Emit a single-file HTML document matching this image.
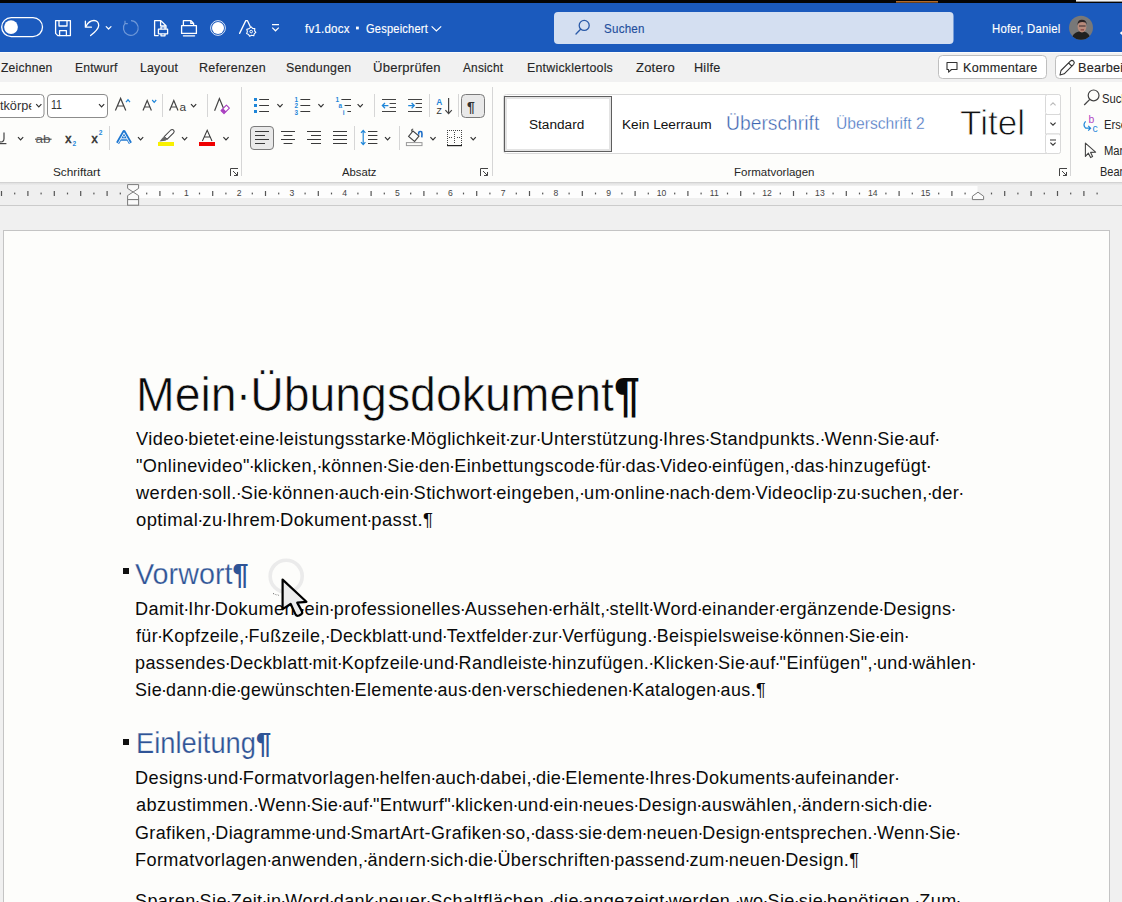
<!DOCTYPE html>
<html><head><meta charset="utf-8">
<style>
*{margin:0;padding:0;box-sizing:border-box}
html,body{width:1122px;height:902px;overflow:hidden;background:#ededed;font-family:'Liberation Sans',sans-serif}
.a{position:absolute}
.tx{position:absolute;white-space:nowrap;line-height:1;transform-origin:0 0}
.d{margin-left:-1px;letter-spacing:-1px}
.pb{-webkit-text-stroke:0;font-weight:bold}
#top{left:0;top:0;width:1122px;height:3px;background:#050505}
#title{left:0;top:3px;width:1122px;height:49px;background:#1b5abd}
#tabs{left:0;top:52px;width:1122px;height:30px;background:#f1f1f1;border-top:1px solid #fbfbfb}
#ribbon{left:0;top:82px;width:1122px;height:100px;background:#fdfdfb}
#ruler{left:0;top:182px;width:1122px;height:24px;background:#eeeeee;border-top:1px solid #d9d9d9;border-bottom:1px solid #cfcfcf}
#rulerw{left:133px;top:185px;width:845px;height:14px;background:#fdfdfd}
#docbg{left:0;top:206px;width:1122px;height:696px;background:#f0f0f0}
#page{left:3px;top:230px;width:1107px;height:700px;background:#fdfdfb;border:1px solid #c4c4c4}
</style></head><body>
<div class="a" id="top"></div>
<div class="a" id="title"></div>
<div class="a" id="tabs"></div>
<div class="a" id="ribbon"></div>
<div class="a" id="docbg"></div>
<div class="a" id="page"></div>
<svg class="a" style="left:0;top:0" width="1122" height="52" viewBox="0 0 1122 52">
<rect x="896" y="1" width="42" height="1.6" fill="#b06a2a"/>
<rect x="1076" y="0" width="46" height="1.6" fill="#f4f4f4"/>
<g fill="none" stroke="#fff" stroke-width="1.3" stroke-linejoin="round" stroke-linecap="round">
<rect x="1.7" y="17.6" width="40.8" height="19" rx="9.5"/>
<path d="M55.6,20.6 H70.4 V35.6 H57.8 L55.6,33.4 Z"/>
<path d="M59,20.6 V26 H67 V20.6"/>
<path d="M59.6,35.6 V30.6 H66.4 V35.6"/>
<path d="M85.4,21.2 V27.2 H91.4"/>
<path d="M86,26.4 C88,22.2 91,20.5 94,20.5 C97,20.5 98.7,23 98.7,25.4 C98.7,28.2 96,31.2 90.6,35.6"/>
<path d="M106.2,26.6 L108.6,29 L111,26.6" stroke-width="1.2"/>
<path d="M154.6,35.6 V20.6 H160.8 L166,25.8 V28.2 M160.6,20.6 V25.8 H166 M154.6,35.6 H158.2"/>
<path d="M161,29.2 V26.8 H165 V29.2 M161,33.8 V35.8 H165 V33.8" fill="#1b5abd"/><path d="M158.4,29.2 H167.6 V33.8 H158.4 Z" fill="#1b5abd"/>
<path d="M183.4,25.2 V20.6 H191 L193.6,23.4 V25.2 M190.8,20.6 V23.4 H193.6"/>
<rect x="181.6" y="25.6" width="14.8" height="7.8"/>
<path d="M183.4,35.8 H194.6"/>
<path d="M239.6,33.4 L245.8,20.6 H247.4 L250.2,26.6"/>
</g>
<circle cx="11" cy="27.1" r="6.9" fill="#fff"/>
<path d="M131,20.6 A7.4,7.4 0 1 1 125.2,23.2 M125,20.8 V23.6 H127.8" fill="none" stroke="#6f98d8" stroke-width="1.2"/>
<circle cx="218" cy="28" r="7.4" fill="none" stroke="#d8e4f7" stroke-width="1"/>
<circle cx="218" cy="28" r="6" fill="#fff"/>
<g fill="none" stroke="#fff" stroke-width="1.2">
<path d="M251.2,26.8 L252.6,28.4 L254.8,28.6 L254.6,30.8 L255.8,32.4 L254.2,33.8 L253.8,35.8 L251.6,35.2 L249.6,36.2 L248.6,34.4 L246.6,33.6 L247.4,31.6 L246.8,29.4 L248.8,28.8 Z" stroke-width="1.1" stroke-linejoin="round"/>
<circle cx="251.2" cy="31.6" r="1.3" stroke-width="1"/>
<path d="M272,24.6 H279 M272.2,27.6 L275.5,30.8 L278.8,27.6"/>
</g>
<g fill="none" stroke="#1f4fa0" stroke-width="1.3" stroke-linecap="round">
</g>
<rect x="554" y="12" width="399.5" height="32" rx="4" fill="#d4dff1"/>
<circle cx="584.2" cy="25.4" r="5" fill="none" stroke="#2a5aa8" stroke-width="1.3"/>
<path d="M580.6,29.2 L576,34" stroke="#2a5aa8" stroke-width="1.3" stroke-linecap="round"/>
<rect x="356" y="26.6" width="2.8" height="2.8" fill="#fff"/>
<path d="M431.6,26.4 L436.4,31 L441.2,26.4" fill="none" stroke="#fff" stroke-width="1.2"/>
<defs><clipPath id="av"><circle cx="1081" cy="27.8" r="12"/></clipPath></defs>
<g clip-path="url(#av)">
<rect x="1068" y="15" width="26" height="26" fill="#787878"/>
<path d="M1071,41 Q1072,33 1079,31.6 H1084 Q1090,33 1091,41 Z" fill="#202020"/>
<ellipse cx="1082" cy="26.6" rx="4.4" ry="5.8" fill="#b88a7a"/>
<path d="M1077.4,25 Q1077.6,19.6 1082,19.8 Q1086.6,19.8 1086.8,24.6 L1085.6,22.6 Q1082,21 1078.6,23 Z" fill="#2a2222"/>
<rect x="1079" y="25.4" width="6.6" height="1.2" fill="#4a3a3a"/>
<rect x="1080.6" y="29.4" width="3.4" height="1" fill="#7a3030"/>
</g>
<path d="M1122,31.2 L1119.8,33.1 L1122,35 Z" fill="#fff"/>
</svg>

<svg class="a" style="left:0;top:52px" width="1122" height="160" viewBox="0 52 1122 160">
<defs><clipPath id="fnc"><rect x="0" y="90" width="32" height="30"/></clipPath></defs>
<!-- tab buttons -->
<rect x="938.5" y="55.5" width="108" height="23" rx="4" fill="#fff" stroke="#bfbfbf"/>
<path d="M947,62.5 H957 V69.5 H951.5 L948.6,72.2 V69.5 H947 Z" fill="none" stroke="#333" stroke-width="1.1" stroke-linejoin="round"/>
<rect x="1055.5" y="55.5" width="80" height="23" rx="4" fill="#fff" stroke="#bfbfbf"/>
<path d="M1060,75 L1061,70.5 L1070.4,61.1 Q1072,59.6 1073.6,61.2 Q1075,62.8 1073.6,64.3 L1064.2,73.8 Z M1068.6,63 L1071.8,66.2" fill="none" stroke="#333" stroke-width="1.1" stroke-linejoin="round"/>
<!-- ribbon separators -->
<g stroke="#d6d6d6" stroke-width="1">
<path d="M241.5,87 V176 M492.5,87 V176 M1070.5,87 V176"/>
<path d="M162.5,94 V117 M207.5,94 V117 M109.5,126 V150 M374.5,94 V117 M429.5,94 V117 M458.5,94 V117 M354.5,126 V150 M399.5,126 V150"/>
</g>
<!-- font boxes -->
<rect x="-6" y="94.5" width="50" height="23" rx="3.5" fill="#fff" stroke="#8c8c8c"/>
<rect x="47.5" y="94.5" width="60" height="23" rx="3.5" fill="#fff" stroke="#8c8c8c"/>
<g fill="none" stroke="#333" stroke-width="1.2">
<path d="M36.2,104.2 L38.8,106.8 L41.4,104.2 M99,104.2 L101.6,106.8 L104.2,104.2"/>
<path d="M191,104.2 L193.6,106.8 L196.2,104.2"/>
<path d="M18,137.2 L20.6,139.8 L23.2,137.2 M138,137.2 L140.6,139.8 L143.2,137.2 M182,137.2 L184.6,139.8 L187.2,137.2 M223.4,137.2 L226,139.8 L228.6,137.2"/>
<path d="M277.4,104.2 L280,106.8 L282.6,104.2 M318.4,104.2 L321,106.8 L323.6,104.2 M357.6,104.2 L360.2,106.8 L362.8,104.2"/>
<path d="M385,137.2 L387.6,139.8 L390.2,137.2 M430.4,137.2 L433,139.8 L435.6,137.2 M470.6,137.2 L473.2,139.8 L475.8,137.2"/>
</g>
<!-- grow / shrink / Aa / clear -->
<g fill="none" stroke="#444" stroke-width="1.2" stroke-linejoin="miter">
<path d="M115.4,110.6 L120.6,98.4 L125.8,110.6 M117.4,106 H123.8"/>
<path d="M143,110.6 L147.2,100.6 L151.4,110.6 M144.6,107 H149.8"/>
<path d="M169.6,110.6 L173.8,100.6 L178,110.6 M171.2,107 H176.4"/>
<path d="M214.6,110.8 L219.4,98.6 L223.6,108.4"/>
</g>
<text x="179.4" y="110.8" font-family="Liberation Sans" font-size="11.8" fill="#3a3a3a">a</text>
<path d="M126,102.2 L128,99.8 L130,102.2" fill="none" stroke="#1f86d9" stroke-width="1.2"/>
<path d="M152.2,100 L154.2,102.4 L156.2,100" fill="none" stroke="#1f86d9" stroke-width="1.2"/>
<path d="M221,110.6 L226.4,105.2 L229.4,108.2 L224,113.6 Z" fill="#fff" stroke="#a93fc0" stroke-width="1.1" stroke-linejoin="round"/><path d="M221,110.6 L223.2,108.4 L226.2,111.4 L224,113.6 Z" fill="#a93fc0"/>
<!-- row 2 font -->
<clipPath id="uc"><rect x="0" y="125" width="8" height="25"/></clipPath>
<g clip-path="url(#uc)" fill="none" stroke="#444" stroke-width="1.2"><path d="M-2,132.4 V138.6 Q-2,142 1,142 Q4,142 4,138.6 V132.4"/><path d="M-4,143.6 H6.4"/></g>
<text x="35.6" y="142.6" font-family="Liberation Sans" font-size="11.4" fill="#555" textLength="15" lengthAdjust="spacingAndGlyphs">ab</text>
<path d="M35,139.2 H51.6" stroke="#444" stroke-width="1.1"/>
<text x="65.2" y="142.6" font-family="Liberation Sans" font-size="12.4" fill="#333" stroke="#333" stroke-width="0.5">x</text>
<text x="72.6" y="146.2" font-family="Liberation Sans" font-weight="bold" font-size="6.6" fill="#1f86d9">2</text>
<text x="91.4" y="142.6" font-family="Liberation Sans" font-size="12.4" fill="#333" stroke="#333" stroke-width="0.5">x</text>
<text x="98.8" y="134.6" font-family="Liberation Sans" font-weight="bold" font-size="6.6" fill="#1f86d9">2</text>
<path d="M117.6,143.2 L124,131.8 L130.4,143.2 M120.2,139 H127.8" fill="none" stroke="#1f78d1" stroke-width="3.4" stroke-linejoin="round"/>
<path d="M118.4,142.8 L124,132.8 L129.6,142.8 M120.8,138.8 H127.2" fill="none" stroke="#fff" stroke-width="0.9"/>
<path d="M164.2,136.6 L170.8,130 Q172.2,128.8 173.6,130.2 Q174.8,131.6 173.6,132.8 L167,139.4 Z" fill="#fff" stroke="#444" stroke-width="1.05" stroke-linejoin="round"/>
<path d="M164.2,136.6 L167,139.4 L165.4,140.8 L159.4,141.6 L162.6,137.8 Z" fill="#666"/>
<rect x="158" y="142" width="16" height="4" fill="#f8f000"/>
<path d="M202.4,141 L207.2,130.2 L212,141 M204.2,137 H210.2" fill="none" stroke="#3a3a3a" stroke-width="1.05"/>
<rect x="199" y="142" width="16" height="4" fill="#f00000"/>
<!-- dialog launchers -->
<g fill="none" stroke="#444" stroke-width="1">
<path d="M230.5,176 V168.5 H238 M233,171 L237.5,175.5 M234,175.5 H237.5 V172"/>
<path d="M480.5,176 V168.5 H488 M483,171 L487.5,175.5 M484,175.5 H487.5 V172"/>
<path d="M1059.5,176 V168.5 H1067 M1062,171 L1066.5,175.5 M1063,175.5 H1066.5 V172"/>
</g>
<!-- paragraph row 1 -->
<g fill="#1f86d9">
<rect x="254" y="98" width="3" height="3"/><rect x="254" y="104" width="3" height="3"/><rect x="254" y="110" width="3" height="3"/>
</g>
<g stroke="#3a3a3a" stroke-width="1.05">
<path d="M259.2,99.5 H269 M259.2,105.5 H269 M259.2,111.5 H269"/>
<path d="M300.4,99.5 H310.2 M300.4,105.5 H310.2 M300.4,111.5 H310.2"/>
<path d="M341.4,99.5 H351 M344.6,105.5 H351 M347.4,111.5 H351"/>
</g>
<g font-family="Liberation Sans" font-weight="bold" fill="#1f86d9">
<text x="294.6" y="102.2" font-size="6.4">1</text><text x="294.6" y="108.4" font-size="6.4">2</text><text x="294.6" y="114.6" font-size="6.4">3</text>
<text x="335.4" y="102.2" font-size="6.4">1</text><text x="338.6" y="108.4" font-size="6.4">a</text><text x="342.8" y="114.6" font-size="6.4">i</text>
</g>
<g stroke="#444" stroke-width="1.2" fill="none">
<path d="M382,99.5 H396 M389.6,103.5 H396 M389.6,107.5 H396 M382,111.5 H396"/>
<path d="M408,99.5 H422 M415.6,103.5 H422 M415.6,107.5 H422 M408,111.5 H422"/>
<path d="M448.6,98 V113.4 M445.4,110.2 L448.6,113.6 L451.8,110.2"/>
</g>
<path d="M388.4,105.6 H382.4 M385,103 L382.4,105.6 L385,108.2" fill="none" stroke="#1f86d9" stroke-width="1.3"/>
<path d="M408.2,105.6 H414 M411.6,103 L414.2,105.6 L411.6,108.2" fill="none" stroke="#1f86d9" stroke-width="1.3"/>
<text x="436.2" y="105" font-family="Liberation Sans" font-weight="bold" font-size="8.4" fill="#1f86d9">A</text>
<text x="436.4" y="114" font-family="Liberation Sans" font-size="8.6" fill="#333">Z</text>
<rect x="461.5" y="94.5" width="23" height="23" rx="4" fill="#e9e9e9" stroke="#7a7a7a"/>
<text x="467" y="111.6" font-family="Liberation Sans" font-weight="bold" font-size="14" fill="#333">¶</text>
<!-- paragraph row 2 -->
<rect x="250.5" y="126.5" width="23" height="23" rx="3.5" fill="#e9e9e9" stroke="#7a7a7a"/>
<g stroke="#3a3a3a" stroke-width="1.05">
<path d="M255,131.5 H269 M255,135.5 H265 M255,139.5 H269 M255,143.5 H265"/>
<path d="M281,131.5 H295 M283.6,135.5 H292.4 M281,139.5 H295 M283.6,143.5 H292.4"/>
<path d="M307,131.5 H321 M311,135.5 H321 M307,139.5 H321 M311,143.5 H321"/>
<path d="M333,131.5 H347 M333,135.5 H347 M333,139.5 H347 M333,143.5 H347"/>
<path d="M368,131.5 H377.4 M368,135.5 H377.4 M368,139.5 H377.4 M368,143.5 H377.4"/>
</g>
<path d="M363.2,130.6 V144.4 M361,132.8 L363.2,130.4 L365.4,132.8 M361,142.2 L363.2,144.6 L365.4,142.2" fill="none" stroke="#1f86d9" stroke-width="1.2"/>
<path d="M408.6,136.4 L413,131 L419,136 L414.6,141.4 Z M412,131.6 Q411,129.4 413.2,129" fill="none" stroke="#444" stroke-width="1.1"/>
<path d="M418.8,134.6 Q418,130.6 421.6,131.8 Q422.4,134 421.8,137.4" fill="none" stroke="#1f6fc8" stroke-width="1.6"/>
<rect x="406.4" y="142.6" width="15.6" height="3" fill="none" stroke="#999" stroke-width="1"/>
<g fill="#444"><path d="M447,130 h1 v1 h-1z M449,130 h1 v1 h-1z M451,130 h1 v1 h-1z M453,130 h1 v1 h-1z M455,130 h1 v1 h-1z M457,130 h1 v1 h-1z M459,130 h1 v1 h-1z M461,130 h1 v1 h-1z M447,132 h1 v1 h-1z M461,132 h1 v1 h-1z M447,134 h1 v1 h-1z M461,134 h1 v1 h-1z M447,136 h1 v1 h-1z M461,136 h1 v1 h-1z M447,138 h1 v1 h-1z M461,138 h1 v1 h-1z M447,140 h1 v1 h-1z M461,140 h1 v1 h-1z M447,142 h1 v1 h-1z M461,142 h1 v1 h-1z M447,144 h1 v1 h-1z M461,144 h1 v1 h-1z M454,132 h1 v1 h-1z M454,134 h1 v1 h-1z M454,136 h1 v1 h-1z M454,138 h1 v1 h-1z M454,140 h1 v1 h-1z M454,142 h1 v1 h-1z M449,137 h1 v1 h-1z M451,137 h1 v1 h-1z M457,137 h1 v1 h-1z M459,137 h1 v1 h-1z"/><rect x="447" y="145" width="15" height="1.2" fill="#222"/></g>
<!-- styles gallery -->
<rect x="503.5" y="94.5" width="557" height="59" rx="3" fill="#fff" stroke="#d9d9d9"/>
<rect x="504.5" y="96.5" width="107" height="55" fill="#fff" stroke="#5e5e5e"/>
<rect x="506" y="98" width="104" height="52" fill="none" stroke="#e3e3e3" stroke-width="2"/>
<g fill="#fff" stroke="#d9d9d9">
<rect x="1045.5" y="94.5" width="15" height="20" rx="2"/>
<rect x="1045.5" y="114.5" width="15" height="19.5"/>
<rect x="1045.5" y="134" width="15" height="19.5" rx="2"/>
</g>
<g fill="none" stroke="#bbb" stroke-width="1.1"><path d="M1050.4,105.4 L1053,102.8 L1055.6,105.4"/></g>
<g fill="none" stroke="#333" stroke-width="1.1"><path d="M1050.4,122.6 L1053,125.2 L1055.6,122.6 M1050,140 H1056 M1050.4,142.6 L1053,145.2 L1055.6,142.6"/></g>
<!-- editing -->
<circle cx="1093.6" cy="95.4" r="5.4" fill="none" stroke="#444" stroke-width="1.2"/>
<path d="M1089.8,99.4 L1084.2,105" stroke="#444" stroke-width="1.3"/>
<text x="1088.4" y="123.4" font-family="Liberation Sans" font-size="10.4" fill="#b146c2">b</text>
<text x="1092.6" y="131.6" font-family="Liberation Sans" font-size="10.4" fill="#1f86d9">c</text>
<path d="M1085.6,121.4 Q1082.4,125 1085.6,128.2 H1090.4 M1088.2,125.8 L1090.6,128.2 L1088.2,130.6" fill="none" stroke="#1f86d9" stroke-width="1.2"/>
<path d="M1085.4,143.2 V156.4 L1088.4,153.2 L1090.6,157.6 L1092.6,156.6 L1090.6,152.4 L1095.6,152.2 Z" fill="none" stroke="#444" stroke-width="1.1" stroke-linejoin="round"/>
<!-- ruler -->
</svg>

<svg class="a" style="left:0;top:180px" width="1122" height="30" viewBox="0 180 1122 30">
<defs><linearGradient id="rg" x1="0" y1="0" x2="0" y2="1"><stop offset="0" stop-color="#d9d9d9"/><stop offset="1" stop-color="#efefef"/></linearGradient></defs>
<rect x="0" y="182" width="1122" height="23.5" fill="#efefef"/>
<rect x="0" y="182" width="1122" height="3.5" fill="url(#rg)"/>
<path d="M0,182.5 H1122" stroke="#d2d2d2"/><path d="M0,205.5 H1122" stroke="#cbcbcb"/>
<rect x="133.5" y="186" width="844" height="12" fill="#fdfdfd"/>
<rect x="0.9" y="191" width="1.2" height="5" fill="#555"/>
<rect x="14.1" y="192.6" width="1.2" height="1.8" fill="#555"/>
<rect x="27.3" y="191" width="1.2" height="5" fill="#555"/>
<rect x="40.5" y="192.6" width="1.2" height="1.8" fill="#555"/>
<rect x="53.7" y="191" width="1.2" height="5" fill="#555"/>
<rect x="66.9" y="192.6" width="1.2" height="1.8" fill="#555"/>
<rect x="80.1" y="191" width="1.2" height="5" fill="#555"/>
<rect x="93.3" y="192.6" width="1.2" height="1.8" fill="#555"/>
<rect x="106.5" y="191" width="1.2" height="5" fill="#555"/>
<rect x="119.7" y="192.6" width="1.2" height="1.8" fill="#555"/>
<rect x="146.1" y="192.6" width="1.2" height="1.8" fill="#555"/>
<rect x="159.3" y="191" width="1.2" height="5" fill="#555"/>
<rect x="172.5" y="192.6" width="1.2" height="1.8" fill="#555"/>
<text x="186.3" y="196" font-family="Liberation Sans" font-size="8.6" fill="#444" text-anchor="middle">1</text>
<rect x="198.9" y="192.6" width="1.2" height="1.8" fill="#555"/>
<rect x="212.1" y="191" width="1.2" height="5" fill="#555"/>
<rect x="225.3" y="192.6" width="1.2" height="1.8" fill="#555"/>
<text x="239.1" y="196" font-family="Liberation Sans" font-size="8.6" fill="#444" text-anchor="middle">2</text>
<rect x="251.7" y="192.6" width="1.2" height="1.8" fill="#555"/>
<rect x="264.9" y="191" width="1.2" height="5" fill="#555"/>
<rect x="278.1" y="192.6" width="1.2" height="1.8" fill="#555"/>
<text x="291.9" y="196" font-family="Liberation Sans" font-size="8.6" fill="#444" text-anchor="middle">3</text>
<rect x="304.5" y="192.6" width="1.2" height="1.8" fill="#555"/>
<rect x="317.7" y="191" width="1.2" height="5" fill="#555"/>
<rect x="330.9" y="192.6" width="1.2" height="1.8" fill="#555"/>
<text x="344.7" y="196" font-family="Liberation Sans" font-size="8.6" fill="#444" text-anchor="middle">4</text>
<rect x="357.3" y="192.6" width="1.2" height="1.8" fill="#555"/>
<rect x="370.5" y="191" width="1.2" height="5" fill="#555"/>
<rect x="383.7" y="192.6" width="1.2" height="1.8" fill="#555"/>
<text x="397.5" y="196" font-family="Liberation Sans" font-size="8.6" fill="#444" text-anchor="middle">5</text>
<rect x="410.1" y="192.6" width="1.2" height="1.8" fill="#555"/>
<rect x="423.3" y="191" width="1.2" height="5" fill="#555"/>
<rect x="436.5" y="192.6" width="1.2" height="1.8" fill="#555"/>
<text x="450.3" y="196" font-family="Liberation Sans" font-size="8.6" fill="#444" text-anchor="middle">6</text>
<rect x="462.9" y="192.6" width="1.2" height="1.8" fill="#555"/>
<rect x="476.1" y="191" width="1.2" height="5" fill="#555"/>
<rect x="489.3" y="192.6" width="1.2" height="1.8" fill="#555"/>
<text x="503.1" y="196" font-family="Liberation Sans" font-size="8.6" fill="#444" text-anchor="middle">7</text>
<rect x="515.7" y="192.6" width="1.2" height="1.8" fill="#555"/>
<rect x="528.9" y="191" width="1.2" height="5" fill="#555"/>
<rect x="542.1" y="192.6" width="1.2" height="1.8" fill="#555"/>
<text x="555.9" y="196" font-family="Liberation Sans" font-size="8.6" fill="#444" text-anchor="middle">8</text>
<rect x="568.5" y="192.6" width="1.2" height="1.8" fill="#555"/>
<rect x="581.7" y="191" width="1.2" height="5" fill="#555"/>
<rect x="594.9" y="192.6" width="1.2" height="1.8" fill="#555"/>
<text x="608.7" y="196" font-family="Liberation Sans" font-size="8.6" fill="#444" text-anchor="middle">9</text>
<rect x="621.3" y="192.6" width="1.2" height="1.8" fill="#555"/>
<rect x="634.5" y="191" width="1.2" height="5" fill="#555"/>
<rect x="647.7" y="192.6" width="1.2" height="1.8" fill="#555"/>
<text x="661.5" y="196" font-family="Liberation Sans" font-size="8.6" fill="#444" text-anchor="middle">10</text>
<rect x="674.1" y="192.6" width="1.2" height="1.8" fill="#555"/>
<rect x="687.3" y="191" width="1.2" height="5" fill="#555"/>
<rect x="700.5" y="192.6" width="1.2" height="1.8" fill="#555"/>
<text x="714.3" y="196" font-family="Liberation Sans" font-size="8.6" fill="#444" text-anchor="middle">11</text>
<rect x="726.9" y="192.6" width="1.2" height="1.8" fill="#555"/>
<rect x="740.1" y="191" width="1.2" height="5" fill="#555"/>
<rect x="753.3" y="192.6" width="1.2" height="1.8" fill="#555"/>
<text x="767.1" y="196" font-family="Liberation Sans" font-size="8.6" fill="#444" text-anchor="middle">12</text>
<rect x="779.7" y="192.6" width="1.2" height="1.8" fill="#555"/>
<rect x="792.9" y="191" width="1.2" height="5" fill="#555"/>
<rect x="806.1" y="192.6" width="1.2" height="1.8" fill="#555"/>
<text x="819.9" y="196" font-family="Liberation Sans" font-size="8.6" fill="#444" text-anchor="middle">13</text>
<rect x="832.5" y="192.6" width="1.2" height="1.8" fill="#555"/>
<rect x="845.7" y="191" width="1.2" height="5" fill="#555"/>
<rect x="858.9" y="192.6" width="1.2" height="1.8" fill="#555"/>
<text x="872.7" y="196" font-family="Liberation Sans" font-size="8.6" fill="#444" text-anchor="middle">14</text>
<rect x="885.3" y="192.6" width="1.2" height="1.8" fill="#555"/>
<rect x="898.5" y="191" width="1.2" height="5" fill="#555"/>
<rect x="911.7" y="192.6" width="1.2" height="1.8" fill="#555"/>
<text x="925.5" y="196" font-family="Liberation Sans" font-size="8.6" fill="#444" text-anchor="middle">15</text>
<rect x="938.1" y="192.6" width="1.2" height="1.8" fill="#555"/>
<rect x="951.3" y="191" width="1.2" height="5" fill="#555"/>
<rect x="964.5" y="192.6" width="1.2" height="1.8" fill="#555"/>
<rect x="990.9" y="192.6" width="1.2" height="1.8" fill="#555"/>
<rect x="1004.1" y="191" width="1.2" height="5" fill="#555"/>
<rect x="1017.3" y="192.6" width="1.2" height="1.8" fill="#555"/>
<rect x="1030.5" y="191" width="1.2" height="5" fill="#555"/>
<rect x="1043.7" y="192.6" width="1.2" height="1.8" fill="#555"/>
<rect x="1056.9" y="191" width="1.2" height="5" fill="#555"/>
<rect x="1070.1" y="192.6" width="1.2" height="1.8" fill="#555"/>
<rect x="1083.3" y="191" width="1.2" height="5" fill="#555"/>
<rect x="1096.5" y="192.6" width="1.2" height="1.8" fill="#555"/>
<path d="M127.6,184.6 H138.6 V188.4 L133.1,192 L127.6,188.4 Z" fill="#fbfbfb" stroke="#7a7a7a" stroke-width="1"/>
<path d="M133.1,192 L138.6,195.6 V199.6 H127.6 V195.6 Z" fill="#fbfbfb" stroke="#7a7a7a" stroke-width="1"/>
<rect x="127.6" y="199.6" width="11" height="5.6" fill="#fbfbfb" stroke="#7a7a7a" stroke-width="1"/>
<path d="M978,192.2 L983.6,196.2 V199.6 H972.4 V196.2 Z" fill="#fbfbfb" stroke="#7a7a7a" stroke-width="1"/>
</svg>
<div id="t0" class="tx" style="left:136.00px;top:430.90px;font-size:17.88px;color:#0a0a0a;font-family:'Liberation Sans',sans-serif;transform:scaleX(1.0178);letter-spacing:0.4px;">Video<span class="d">·</span>bietet<span class="d">·</span>eine<span class="d">·</span>leistungsstarke<span class="d">·</span>Möglichkeit<span class="d">·</span>zur<span class="d">·</span>Unterstützung<span class="d">·</span>Ihres<span class="d">·</span>Standpunkts.<span class="d">·</span>Wenn<span class="d">·</span>Sie<span class="d">·</span>auf<span class="d">·</span></div>
<div id="t1" class="tx" style="left:136.00px;top:458.01px;font-size:17.88px;color:#0a0a0a;font-family:'Liberation Sans',sans-serif;transform:scaleX(1.0140);letter-spacing:0.4px;">"Onlinevideo"<span class="d">·</span>klicken,<span class="d">·</span>können<span class="d">·</span>Sie<span class="d">·</span>den<span class="d">·</span>Einbettungscode<span class="d">·</span>für<span class="d">·</span>das<span class="d">·</span>Video<span class="d">·</span>einfügen,<span class="d">·</span>das<span class="d">·</span>hinzugefügt<span class="d">·</span></div>
<div id="t2" class="tx" style="left:136.00px;top:485.10px;font-size:17.88px;color:#0a0a0a;font-family:'Liberation Sans',sans-serif;transform:scaleX(1.0210);letter-spacing:0.4px;">werden<span class="d">·</span>soll.<span class="d">·</span>Sie<span class="d">·</span>können<span class="d">·</span>auch<span class="d">·</span>ein<span class="d">·</span>Stichwort<span class="d">·</span>eingeben,<span class="d">·</span>um<span class="d">·</span>online<span class="d">·</span>nach<span class="d">·</span>dem<span class="d">·</span>Videoclip<span class="d">·</span>zu<span class="d">·</span>suchen,<span class="d">·</span>der<span class="d">·</span></div>
<div id="t3" class="tx" style="left:136.00px;top:512.20px;font-size:17.88px;color:#0a0a0a;font-family:'Liberation Sans',sans-serif;transform:scaleX(1.0314);letter-spacing:0.4px;">optimal<span class="d">·</span>zu<span class="d">·</span>Ihrem<span class="d">·</span>Dokument<span class="d">·</span>passt.¶</div>
<div id="t4" class="tx" style="left:134.99px;top:601.01px;font-size:17.88px;color:#0a0a0a;font-family:'Liberation Sans',sans-serif;transform:scaleX(1.0136);letter-spacing:0.4px;">Damit<span class="d">·</span>Ihr<span class="d">·</span>Dokument<span class="d">·</span>ein<span class="d">·</span>professionelles<span class="d">·</span>Aussehen<span class="d">·</span>erhält,<span class="d">·</span>stellt<span class="d">·</span>Word<span class="d">·</span>einander<span class="d">·</span>ergänzende<span class="d">·</span>Designs<span class="d">·</span></div>
<div id="t5" class="tx" style="left:136.00px;top:628.10px;font-size:17.88px;color:#0a0a0a;font-family:'Liberation Sans',sans-serif;transform:scaleX(1.0013);letter-spacing:0.4px;">für<span class="d">·</span>Kopfzeile,<span class="d">·</span>Fußzeile,<span class="d">·</span>Deckblatt<span class="d">·</span>und<span class="d">·</span>Textfelder<span class="d">·</span>zur<span class="d">·</span>Verfügung.<span class="d">·</span>Beispielsweise<span class="d">·</span>können<span class="d">·</span>Sie<span class="d">·</span>ein<span class="d">·</span></div>
<div id="t6" class="tx" style="left:134.99px;top:655.20px;font-size:17.88px;color:#0a0a0a;font-family:'Liberation Sans',sans-serif;transform:scaleX(1.0084);letter-spacing:0.4px;">passendes<span class="d">·</span>Deckblatt<span class="d">·</span>mit<span class="d">·</span>Kopfzeile<span class="d">·</span>und<span class="d">·</span>Randleiste<span class="d">·</span>hinzufügen.<span class="d">·</span>Klicken<span class="d">·</span>Sie<span class="d">·</span>auf<span class="d">·</span>"Einfügen",<span class="d">·</span>und<span class="d">·</span>wählen<span class="d">·</span></div>
<div id="t7" class="tx" style="left:135.00px;top:682.31px;font-size:17.88px;color:#0a0a0a;font-family:'Liberation Sans',sans-serif;transform:scaleX(1.0032);letter-spacing:0.4px;">Sie<span class="d">·</span>dann<span class="d">·</span>die<span class="d">·</span>gewünschten<span class="d">·</span>Elemente<span class="d">·</span>aus<span class="d">·</span>den<span class="d">·</span>verschiedenen<span class="d">·</span>Katalogen<span class="d">·</span>aus.¶</div>
<div id="t8" class="tx" style="left:134.99px;top:770.31px;font-size:17.88px;color:#0a0a0a;font-family:'Liberation Sans',sans-serif;transform:scaleX(1.0146);letter-spacing:0.4px;">Designs<span class="d">·</span>und<span class="d">·</span>Formatvorlagen<span class="d">·</span>helfen<span class="d">·</span>auch<span class="d">·</span>dabei,<span class="d">·</span>die<span class="d">·</span>Elemente<span class="d">·</span>Ihres<span class="d">·</span>Dokuments<span class="d">·</span>aufeinander<span class="d">·</span></div>
<div id="t9" class="tx" style="left:136.00px;top:797.40px;font-size:17.88px;color:#0a0a0a;font-family:'Liberation Sans',sans-serif;transform:scaleX(1.0179);letter-spacing:0.4px;">abzustimmen.<span class="d">·</span>Wenn<span class="d">·</span>Sie<span class="d">·</span>auf<span class="d">·</span>"Entwurf"<span class="d">·</span>klicken<span class="d">·</span>und<span class="d">·</span>ein<span class="d">·</span>neues<span class="d">·</span>Design<span class="d">·</span>auswählen,<span class="d">·</span>ändern<span class="d">·</span>sich<span class="d">·</span>die<span class="d">·</span></div>
<div id="t10" class="tx" style="left:135.00px;top:824.51px;font-size:17.88px;color:#0a0a0a;font-family:'Liberation Sans',sans-serif;transform:scaleX(1.0037);letter-spacing:0.4px;">Grafiken,<span class="d">·</span>Diagramme<span class="d">·</span>und<span class="d">·</span>SmartArt-Grafiken<span class="d">·</span>so,<span class="d">·</span>dass<span class="d">·</span>sie<span class="d">·</span>dem<span class="d">·</span>neuen<span class="d">·</span>Design<span class="d">·</span>entsprechen.<span class="d">·</span>Wenn<span class="d">·</span>Sie<span class="d">·</span></div>
<div id="t11" class="tx" style="left:134.99px;top:851.60px;font-size:17.88px;color:#0a0a0a;font-family:'Liberation Sans',sans-serif;transform:scaleX(1.0126);letter-spacing:0.4px;">Formatvorlagen<span class="d">·</span>anwenden,<span class="d">·</span>ändern<span class="d">·</span>sich<span class="d">·</span>die<span class="d">·</span>Überschriften<span class="d">·</span>passend<span class="d">·</span>zum<span class="d">·</span>neuen<span class="d">·</span>Design.¶</div>
<div id="t12" class="tx" style="left:134.99px;top:892.81px;font-size:17.88px;color:#0a0a0a;font-family:'Liberation Sans',sans-serif;transform:scaleX(1.0098);letter-spacing:0.4px;">Sparen<span class="d">·</span>Sie<span class="d">·</span>Zeit<span class="d">·</span>in<span class="d">·</span>Word<span class="d">·</span>dank<span class="d">·</span>neuer<span class="d">·</span>Schaltflächen,<span class="d">·</span>die<span class="d">·</span>angezeigt<span class="d">·</span>werden,<span class="d">·</span>wo<span class="d">·</span>Sie<span class="d">·</span>sie<span class="d">·</span>benötigen.<span class="d">·</span>Zum<span class="d">·</span></div>
<div id="t13" class="tx" style="left:135.96px;top:370.01px;font-size:48.26px;color:#0a0a0a;font-family:'Liberation Sans',sans-serif;transform:scaleX(0.9618);-webkit-text-stroke:0.6px #fdfdfb;">Mein<span class="d">·</span>Übungsdokument<span class=pb>¶</span></div>
<div id="t14" class="tx" style="left:135.21px;top:560.02px;font-size:29.07px;color:#2f5496;font-family:'Liberation Sans',sans-serif;transform:scaleX(0.9895);-webkit-text-stroke:0.25px #fdfdfb;">Vorwort<span class=pb>¶</span></div>
<div id="t15" class="tx" style="left:135.62px;top:729.02px;font-size:29.07px;color:#2f5496;font-family:'Liberation Sans',sans-serif;transform:scaleX(0.9397);-webkit-text-stroke:0.25px #fdfdfb;">Einleitung<span class=pb>¶</span></div>
<div id="t16" class="tx" style="left:1.00px;top:61.01px;font-size:13.66px;color:#262626;font-family:'Liberation Sans',sans-serif;transform:scaleX(0.8860);-webkit-text-stroke:0.15px #262626;letter-spacing:0.25px;">Zeichnen</div>
<div id="t17" class="tx" style="left:74.52px;top:61.01px;font-size:13.66px;color:#262626;font-family:'Liberation Sans',sans-serif;transform:scaleX(0.8875);-webkit-text-stroke:0.15px #262626;letter-spacing:0.25px;">Entwurf</div>
<div id="t18" class="tx" style="left:139.51px;top:61.01px;font-size:13.66px;color:#262626;font-family:'Liberation Sans',sans-serif;transform:scaleX(0.8952);-webkit-text-stroke:0.15px #262626;letter-spacing:0.25px;">Layout</div>
<div id="t19" class="tx" style="left:199.08px;top:61.01px;font-size:13.66px;color:#262626;font-family:'Liberation Sans',sans-serif;transform:scaleX(0.9155);-webkit-text-stroke:0.15px #262626;letter-spacing:0.25px;">Referenzen</div>
<div id="t20" class="tx" style="left:286.40px;top:61.01px;font-size:13.66px;color:#262626;font-family:'Liberation Sans',sans-serif;transform:scaleX(0.9070);-webkit-text-stroke:0.15px #262626;letter-spacing:0.25px;">Sendungen</div>
<div id="t21" class="tx" style="left:373.25px;top:61.01px;font-size:13.66px;color:#262626;font-family:'Liberation Sans',sans-serif;transform:scaleX(0.9580);-webkit-text-stroke:0.15px #262626;letter-spacing:0.25px;">Überprüfen</div>
<div id="t22" class="tx" style="left:463.00px;top:61.01px;font-size:13.66px;color:#262626;font-family:'Liberation Sans',sans-serif;transform:scaleX(0.8660);-webkit-text-stroke:0.15px #262626;letter-spacing:0.25px;">Ansicht</div>
<div id="t23" class="tx" style="left:526.50px;top:61.01px;font-size:13.66px;color:#262626;font-family:'Liberation Sans',sans-serif;transform:scaleX(0.9074);-webkit-text-stroke:0.15px #262626;letter-spacing:0.25px;">Entwicklertools</div>
<div id="t24" class="tx" style="left:636.00px;top:61.01px;font-size:13.66px;color:#262626;font-family:'Liberation Sans',sans-serif;transform:scaleX(0.9500);-webkit-text-stroke:0.15px #262626;letter-spacing:0.25px;">Zotero</div>
<div id="t25" class="tx" style="left:694.38px;top:61.01px;font-size:13.66px;color:#262626;font-family:'Liberation Sans',sans-serif;transform:scaleX(0.9259);-webkit-text-stroke:0.15px #262626;letter-spacing:0.25px;">Hilfe</div>
<div id="t26" class="tx" style="left:305.00px;top:22.80px;font-size:12.79px;color:#fff;font-family:'Liberation Sans',sans-serif;transform:scaleX(0.9020);-webkit-text-stroke:0.15px #fff;letter-spacing:0.25px;">fv1.docx</div>
<div id="t27" class="tx" style="left:365.61px;top:22.80px;font-size:12.79px;color:#fff;font-family:'Liberation Sans',sans-serif;transform:scaleX(0.8648);-webkit-text-stroke:0.15px #fff;letter-spacing:0.25px;">Gespeichert</div>
<div id="t28" class="tx" style="left:603.50px;top:22.80px;font-size:12.79px;color:#1f4e9c;font-family:'Liberation Sans',sans-serif;transform:scaleX(0.9068);-webkit-text-stroke:0.15px #1f4e9c;letter-spacing:0.25px;">Suchen</div>
<div id="t29" class="tx" style="left:991.61px;top:22.91px;font-size:12.79px;color:#fff;font-family:'Liberation Sans',sans-serif;transform:scaleX(0.8895);-webkit-text-stroke:0.15px #fff;letter-spacing:0.25px;">Hofer, Daniel</div>
<div id="t30" class="tx" style="left:962.71px;top:61.01px;font-size:13.66px;color:#262626;font-family:'Liberation Sans',sans-serif;transform:scaleX(0.9250);-webkit-text-stroke:0.15px #262626;letter-spacing:0.25px;">Kommentare</div>
<div id="t31" class="tx" style="left:1078.37px;top:61.01px;font-size:13.66px;color:#262626;font-family:'Liberation Sans',sans-serif;transform:scaleX(0.9300);-webkit-text-stroke:0.15px #262626;letter-spacing:0.25px;">Bearbeiten</div>
<div id="t32" class="tx" style="left:-0.50px;top:98.61px;font-size:13.37px;color:#333;font-family:'Liberation Sans',sans-serif;transform:scaleX(0.9500);width:33px;overflow:hidden;">tkörpe</div>
<div id="t33" class="tx" style="left:50.61px;top:99.42px;font-size:12.21px;color:#333;font-family:'Liberation Sans',sans-serif;transform:scaleX(0.8667);">11</div>
<div id="t34" class="tx" style="left:53.29px;top:165.80px;font-size:11.63px;color:#262626;font-family:'Liberation Sans',sans-serif;transform:scaleX(1.0152);">Schriftart</div>
<div id="t35" class="tx" style="left:342.11px;top:165.80px;font-size:11.63px;color:#262626;font-family:'Liberation Sans',sans-serif;transform:scaleX(0.9686);">Absatz</div>
<div id="t36" class="tx" style="left:733.50px;top:165.91px;font-size:11.63px;color:#262626;font-family:'Liberation Sans',sans-serif;transform:scaleX(0.9889);">Formatvorlagen</div>
<div id="t37" class="tx" style="left:1100.08px;top:166.91px;font-size:11.92px;color:#262626;font-family:'Liberation Sans',sans-serif;transform:scaleX(0.9200);">Bearbeiten</div>
<div id="t38" class="tx" style="left:529.33px;top:118.50px;font-size:12.65px;color:#111;font-family:'Liberation Sans',sans-serif;transform:scaleX(1.0780);">Standard</div>
<div id="t39" class="tx" style="left:621.61px;top:118.80px;font-size:12.65px;color:#111;font-family:'Liberation Sans',sans-serif;transform:scaleX(1.0817);">Kein Leerraum</div>
<div id="t40" class="tx" style="left:726.04px;top:113.31px;font-size:20.06px;color:#3a63b0;font-family:'Liberation Sans',sans-serif;transform:scaleX(0.9625);-webkit-text-stroke:0.4px #fff;">Überschrift</div>
<div id="t41" class="tx" style="left:836.31px;top:115.81px;font-size:15.70px;color:#4470c0;font-family:'Liberation Sans',sans-serif;transform:scaleX(0.9966);-webkit-text-stroke:0.3px #fff;">Überschrift 2</div>
<div id="t42" class="tx" style="left:959.90px;top:105.71px;font-size:34.88px;color:#111;font-family:'Liberation Sans',sans-serif;transform:scaleX(1.0066);-webkit-text-stroke:0.8px #fff;">Titel</div>
<div id="t43" class="tx" style="left:1102.29px;top:92.92px;font-size:12.21px;color:#262626;font-family:'Liberation Sans',sans-serif;transform:scaleX(0.9200);">Suchen</div>
<div id="t44" class="tx" style="left:1103.50px;top:119.31px;font-size:12.21px;color:#262626;font-family:'Liberation Sans',sans-serif;transform:scaleX(0.9200);">Ersetzen</div>
<div id="t45" class="tx" style="left:1103.50px;top:144.61px;font-size:12.21px;color:#262626;font-family:'Liberation Sans',sans-serif;transform:scaleX(0.9200);">Markieren</div>
<div class="a" style="left:123px;top:568px;width:6px;height:6px;background:#111"></div>
<div class="a" style="left:123px;top:738.5px;width:6px;height:6px;background:#111"></div>
<svg class="a" style="left:260px;top:555px" width="60" height="70" viewBox="260 555 60 70">
<circle cx="286.2" cy="576.2" r="16" fill="none" stroke="#ebebeb" stroke-width="3.6"/>
<path d="M273,593.4 l1.2,0.6 M275.6,594.2 l0.8,1 M278,594.6 l0.6,1" stroke="#777" stroke-width="1"/>
<path d="M282.6,579.6 V609.2 L290.6,603.8 L295.6,614.6 Q296.8,616.4 299,615.4 L301,614.4 Q302.8,613.2 302,611.4 L297.2,602.6 L306.4,601.8 Z" fill="#ececec" stroke="#000" stroke-width="2.2" stroke-linejoin="round"/>
</svg>

</body></html>
